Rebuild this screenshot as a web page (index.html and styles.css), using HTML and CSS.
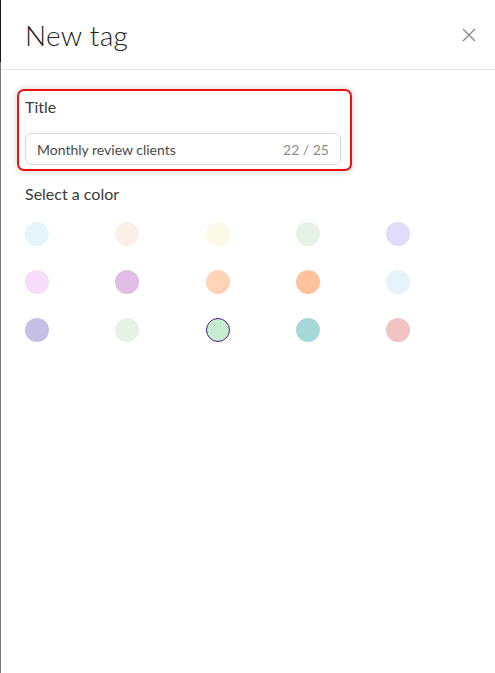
FILE: index.html
```html
<!DOCTYPE html>
<html>
<head>
  <title>New tag</title>
  <link rel="stylesheet" href="styles.css">
</head>
<body>
  <div class="edge"></div>
  <div class="drawer">
    <div class="drawer-header">
      <h1>New tag</h1>
      <button class="close" aria-label="Close">
        <svg width="14" height="14" viewBox="0 0 14 14"><path d="M1 1L13 13M13 1L1 13" stroke="#8a8a8a" stroke-width="1.4" fill="none"/></svg>
      </button>
    </div>

    <div class="drawer-body">
      <div class="field focused">
        <label for="tagTitle">Title</label>
        <div class="input-wrap">
          <input id="tagTitle" type="text" value="Monthly review clients" maxlength="25">
          <span class="counter">22 / 25</span>
        </div>
      </div>

      <div class="section-label">Select a color</div>
      <div class="swatches">
        <span class="swatch" style="background:#e4f4fa"></span>
        <span class="swatch" style="background:#fbf0e6"></span>
        <span class="swatch" style="background:#fbfae6"></span>
        <span class="swatch" style="background:#e5f2e6"></span>
        <span class="swatch" style="background:#e0dcfa"></span>

        <span class="swatch" style="background:#f8dcfb"></span>
        <span class="swatch" style="background:#e0bde4"></span>
        <span class="swatch" style="background:#ffd4b6"></span>
        <span class="swatch" style="background:#ffc29d"></span>
        <span class="swatch" style="background:#e4f4fa"></span>

        <span class="swatch" style="background:#c6bfe6"></span>
        <span class="swatch" style="background:#e5f2e6"></span>
        <span class="swatch selected" style="background:#c8ecd0"></span>
        <span class="swatch" style="background:#a8d9da"></span>
        <span class="swatch" style="background:#f2c3c3"></span>
      </div>
    </div>
  </div>
</body>
</html>
```

FILE: styles.css
```css
html, body {
  margin: 0;
  height: 100%;
}
body {
  display: flex;
  font-family: Lato, "Open Sans", sans-serif;
  color: #333;
  background: #fff;
}
/* edge of the page behind the drawer */
.edge {
  width: 1px;
  flex: none;
  background: linear-gradient(#1a1a1a 0, #1a1a1a 62px, #7a7a7a 62px);
}
.drawer {
  flex: 1;
}
.drawer-header {
  height: 69px;
  border-bottom: 1px solid #e6e6e6;
  display: flex;
  align-items: center;
  justify-content: space-between;
  padding: 0 19px 0 24px;
}
.drawer-header h1 {
  margin: 0;
  font-size: 28px;
  font-weight: 300;
  color: #222;
  letter-spacing: 0.3px;
}
.close {
  background: none;
  border: none;
  padding: 0;
  cursor: pointer;
  display: flex;
}
.drawer-body {
  padding: 19px 24px 0 16px;
}
.field {
  box-sizing: border-box;
  width: 335px;
  padding: 6px 9px 4px 6px;
  border-radius: 7px;
}
.field.focused {
  border: 2px solid #f01010;
  box-shadow: 0 0 8px rgba(0, 0, 0, 0.18);
}
.field label {
  display: block;
  font-size: 16px;
  font-weight: 400;
  color: #3a3a3a;
  margin-bottom: 17px;
}
.input-wrap {
  display: flex;
  align-items: center;
  height: 30px;
  border: 1px solid #d9d9d9;
  border-radius: 6px;
  padding: 0 11px;
}
.input-wrap input {
  flex: 1;
  min-width: 0;
  border: none;
  outline: none;
  font-family: inherit;
  font-size: 14px;
  font-weight: 400;
  color: #4a4a4a;
  padding: 0;
  background: transparent;
}
.counter {
  font-size: 14px;
  color: #8a8a8a;
}
.section-label {
  margin: 13px 0 0 8px;
  font-size: 16px;
  font-weight: 400;
  color: #3a3a3a;
}
.swatches {
  margin: 19px 0 0 8px;
  width: 385px;
  display: grid;
  grid-template-columns: repeat(5, 24px);
  justify-content: space-between;
  row-gap: 24px;
}
.swatch {
  width: 24px;
  height: 24px;
  border-radius: 50%;
  box-sizing: border-box;
  cursor: pointer;
}
.swatch.selected {
  border: 1px solid #4b1a8a;
}
```
